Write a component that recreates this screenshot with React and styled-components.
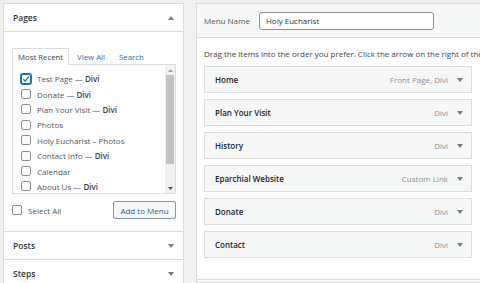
import styled, { createGlobalStyle } from "styled-components";

const GlobalStyle = createGlobalStyle`
  html, body {
    margin: 0;
    padding: 0;
    background: #f0f0f1;
    font-family: "Open Sans", "Noto Sans", sans-serif;
    color: #3c434a;
    overflow: hidden;
  }
  * { box-sizing: border-box; }
`;

const pages = [
  { label: "Test Page", suffix: "Divi", checked: true },
  { label: "Donate", suffix: "Divi" },
  { label: "Plan Your Visit", suffix: "Divi" },
  { label: "Photos" },
  { label: "Holy Eucharist \u2013 Photos" },
  { label: "Contact Info", suffix: "Divi" },
  { label: "Calendar" },
  { label: "About Us", suffix: "Divi" },
];

const menuItems = [
  { title: "Home", meta: "Front Page, Divi" },
  { title: "Plan Your Visit", meta: "Divi" },
  { title: "History", meta: "Divi" },
  { title: "Eparchial Website", meta: "Custom Link" },
  { title: "Donate", meta: "Divi" },
  { title: "Contact", meta: "Divi" },
];

const Page = styled.div`
  display: flex;
  gap: 12px;
  padding: 3px 0 0 3px;
  height: 283px;
`;

const Sidebar = styled.div`
  width: 181px;
  flex-shrink: 0;
  background: #fff;
  border: 1px solid #dcdcde;
  border-bottom: none;
`;

const SectionHeader = styled.div`
  height: 28px;
  display: flex;
  align-items: center;
  justify-content: space-between;
  padding: 0 9px 0 9px;
  font-size: 8.5px;
  font-weight: 600;
  color: #2c3338;
  border-top: ${(p) => (p.first ? "none" : "1px solid #dcdcde")};
  border-bottom: ${(p) => (p.open ? "1px solid #dcdcde" : "none")};
`;

const SectionBody = styled.div`
  padding: 15px 7px 12px 8px;
`;

const Tabs = styled.div`
  display: flex;
  align-items: flex-end;
  font-size: 7.8px;
`;

const Tab = styled.div`
  height: 17px;
  display: flex;
  align-items: center;
  padding: 0 5px;
  margin-left: ${(p) => (p.active ? "0" : "2px")};
  color: ${(p) => (p.active ? "#3c434a" : "#2271b1")};
  background: ${(p) => (p.active ? "#fff" : "transparent")};
  border: ${(p) => (p.active ? "1px solid #dcdcde" : "1px solid transparent")};
  border-bottom: none;
  position: relative;
  top: 1px;
`;

const ListBox = styled.div`
  height: 130px;
  border: 1px solid #dcdcde;
  display: flex;
  background: #fff;
`;

const List = styled.div`
  flex: 1;
  padding: 6px 0 0 8px;
`;

const ListRow = styled.label`
  display: flex;
  align-items: center;
  gap: 6px;
  height: 15.4px;
  font-size: 8px;
  color: #50575e;
  white-space: nowrap;
  b { font-weight: 600; color: #3c434a; }
`;

const Box = styled.span`
  width: 10px;
  height: 10px;
  flex-shrink: 0;
  border: 1px solid ${(p) => (p.checked ? "#2271b1" : "#8c8f94")};
  border-radius: 2px;
  background: #fff;
  display: flex;
  align-items: center;
  justify-content: center;
  box-shadow: ${(p) => (p.checked ? "0 0 0 1px #2271b1" : "none")};
`;

const Scrollbar = styled.div`
  width: 10px;
  display: flex;
  flex-direction: column;
  align-items: center;
  background: #f1f1f1;
`;

const ScrollArrow = styled.div`
  height: 10px;
  display: flex;
  align-items: center;
  justify-content: center;
`;

const Thumb = styled.div`
  width: 8px;
  height: 89px;
  background: #c1c1c1;
`;

const ScrollSpacer = styled.div`
  flex: 1;
`;

const Actions = styled.div`
  display: flex;
  align-items: center;
  justify-content: space-between;
  margin-top: 7px;
  height: 18px;
`;

const SelectAll = styled.label`
  display: flex;
  align-items: center;
  gap: 6px;
  font-size: 8px;
  color: #50575e;
`;

const Button = styled.button`
  height: 18px;
  width: 63px;
  padding: 0;
  font-family: inherit;
  font-size: 8px;
  color: #2c5e8a;
  background: #f6f7f7;
  border: 1px solid #7e9bb6;
  border-radius: 2px;
`;

const Main = styled.div`
  flex: 1;
  margin-right: -20px;
  background: #fff;
  border: 1px solid #dcdcde;
  display: flex;
  flex-direction: column;
  overflow: hidden;
`;

const MainHeader = styled.div`
  height: 34px;
  background: #f6f7f7;
  border-bottom: 1px solid #dcdcde;
  display: flex;
  align-items: center;
  padding: 0 0 0 7px;
  gap: 9px;
  font-size: 8px;
  color: #50575e;
`;

const NameInput = styled.div`
  width: 175px;
  height: 18px;
  border: 1px solid #8c8f94;
  border-radius: 3px;
  background: #fff;
  display: flex;
  align-items: center;
  padding: 0 6px;
  color: #2c3338;
  font-size: 8px;
`;

const MainBody = styled.div`
  flex: 1;
  padding: 10px 0 0 7px;
`;

const Hint = styled.p`
  margin: 0 0 6px 0;
  font-size: 8px;
  line-height: 12px;
  white-space: nowrap;
  color: #3c434a;
`;

const Items = styled.div`
  display: flex;
  flex-direction: column;
  gap: 6px;
  width: 268px;
`;

const Item = styled.div`
  height: 27px;
  background: #f6f7f7;
  border: 1px solid #dcdcde;
  display: flex;
  align-items: center;
  padding: 0 8px 0 10px;
  font-size: 8px;
`;

const ItemTitle = styled.span`
  flex: 1;
  font-weight: 600;
  color: #1d2327;
`;

const ItemMeta = styled.span`
  color: #8c8f94;
  margin-right: 9px;
`;

const Footer = styled.div`
  height: 3px;
  background: #f6f7f7;
  border-top: 1px solid #dcdcde;
`;

const Arrow = ({ up }) => (
  <svg width="6" height="4" viewBox="0 0 6 4">
    <polygon points={up ? "0,4 6,4 3,0" : "0,0 6,0 3,4"} fill="#787c82" />
  </svg>
);

const Check = () => (
  <svg width="8" height="8" viewBox="0 0 8 8">
    <path d="M1.3 4.2 L3.2 6.1 L6.8 1.6" stroke="#2271b1" strokeWidth="1.3" fill="none" />
  </svg>
);

export default function App() {
  return (
    <>
      <GlobalStyle />
      <Page>
        <Sidebar>
          <SectionHeader first open>
            Pages
            <Arrow up />
          </SectionHeader>
          <SectionBody>
            <Tabs>
              <Tab active>Most Recent</Tab>
              <Tab>View All</Tab>
              <Tab>Search</Tab>
            </Tabs>
            <ListBox>
              <List>
                {pages.map((p) => (
                  <ListRow key={p.label}>
                    <Box checked={p.checked}>{p.checked && <Check />}</Box>
                    <span>
                      {p.label}
                      {p.suffix && (
                        <>
                          {" \u2014 "}
                          <b>{p.suffix}</b>
                        </>
                      )}
                    </span>
                  </ListRow>
                ))}
              </List>
              <Scrollbar>
                <ScrollArrow>
                  <svg width="5" height="3" viewBox="0 0 5 3">
                    <polygon points="0,3 5,3 2.5,0" fill="#a3a3a3" />
                  </svg>
                </ScrollArrow>
                <Thumb />
                <ScrollSpacer />
                <ScrollArrow>
                  <svg width="5" height="3" viewBox="0 0 5 3">
                    <polygon points="0,0 5,0 2.5,3" fill="#505050" />
                  </svg>
                </ScrollArrow>
              </Scrollbar>
            </ListBox>
            <Actions>
              <SelectAll>
                <Box />
                Select All
              </SelectAll>
              <Button>Add to Menu</Button>
            </Actions>
          </SectionBody>
          <SectionHeader>
            Posts
            <Arrow />
          </SectionHeader>
          <SectionHeader>
            Steps
            <Arrow />
          </SectionHeader>
        </Sidebar>
        <Main>
          <MainHeader>
            Menu Name
            <NameInput>Holy Eucharist</NameInput>
          </MainHeader>
          <MainBody>
            <Hint>
              Drag the items into the order you prefer. Click the arrow on the right of the item to reveal additional configuration options.
            </Hint>
            <Items>
              {menuItems.map((m) => (
                <Item key={m.title}>
                  <ItemTitle>{m.title}</ItemTitle>
                  <ItemMeta>{m.meta}</ItemMeta>
                  <Arrow />
                </Item>
              ))}
            </Items>
          </MainBody>
          <Footer />
        </Main>
      </Page>
    </>
  );
}
